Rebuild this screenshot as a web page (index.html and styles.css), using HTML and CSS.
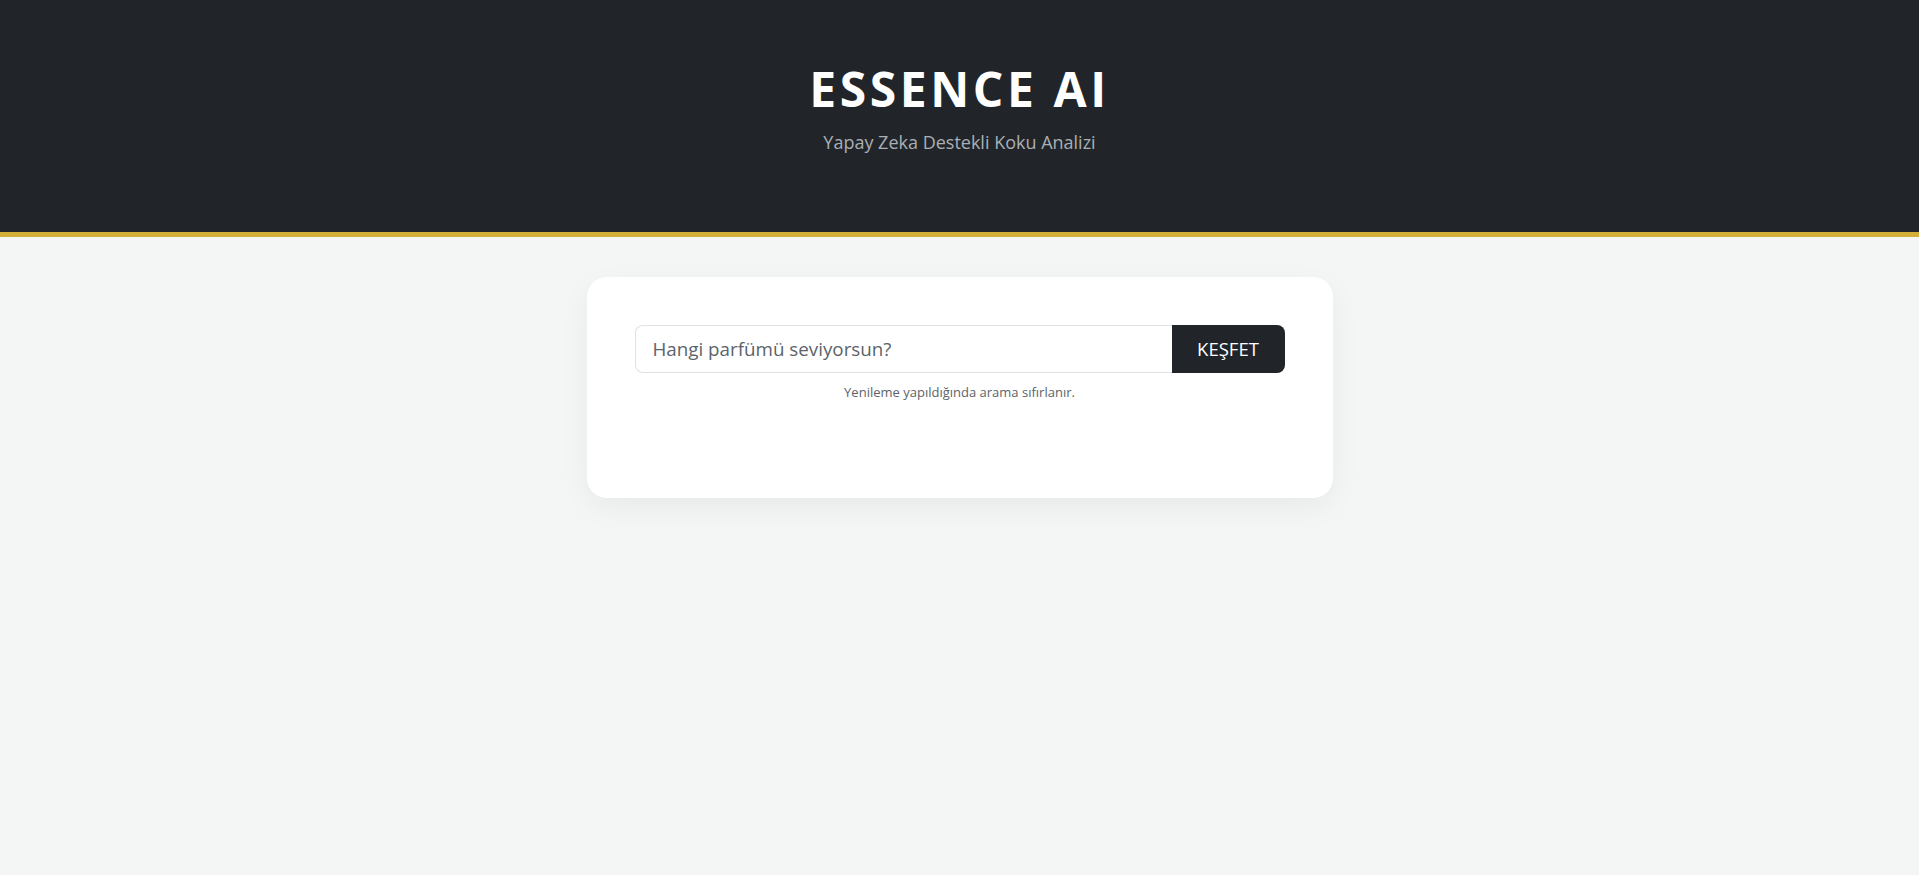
FILE: index.html
```html
<!DOCTYPE html>
<html lang="tr">
<head>
<meta charset="utf-8">
<title>Essence AI</title>
<link rel="stylesheet" href="styles.css">
</head>
<body>
<header class="hero">
  <h1 class="brand">ESSENCE AI</h1>
  <p class="tagline">Yapay Zeka Destekli Koku Analizi</p>
</header>
<main class="main">
  <section class="card">
    <form class="search" onsubmit="return false;">
      <input class="search-input" type="text" placeholder="Hangi parfümü seviyorsun?">
      <button class="search-btn" type="submit">KEŞFET</button>
    </form>
    <p class="hint">Yenileme yapıldığında arama sıfırlanır.</p>
    <div class="results"></div>
  </section>
</main>
</body>
</html>
```

FILE: styles.css
```css
* { box-sizing: border-box; }
html, body { margin: 0; padding: 0; }
body {
  background: #f4f6f5;
  font-family: "Open Sans", "Noto Sans", sans-serif;
  color: #212529;
  min-height: 100vh;
}
.hero {
  background: #212529;
  border-bottom: 5px solid #d4af37;
  text-align: center;
  padding: 60px 0 76px;
}
.brand {
  margin: 0;
  font-size: 48px;
  line-height: 1.2;
  font-weight: 700;
  color: #ffffff;
  letter-spacing: 3.6px;
}
.tagline {
  margin: 11px 0 0;
  font-size: 18px;
  line-height: 27px;
  font-weight: 400;
  color: #a9afb5;
}
.main {
  display: flex;
  justify-content: center;
  padding-top: 40px;
}
.card {
  width: 746px;
  background: #ffffff;
  border-radius: 20px;
  padding: 48px;
  box-shadow: 0 10px 30px rgba(0, 0, 0, 0.05);
}
.search {
  display: flex;
  margin: 0;
  height: 48px;
}
.search-input {
  flex: 1;
  min-width: 0;
  height: 48px;
  border: 1px solid #dee2e6;
  border-right: none;
  border-radius: 8px 0 0 8px;
  padding: 0 17px;
  font-family: inherit;
  font-size: 18.8px;
  color: #212529;
  background: #fff;
  outline: none;
}
.search-input::placeholder { color: #5c636a; opacity: 1; }
.search-btn {
  width: 113px;
  height: 48px;
  border: none;
  border-radius: 0 8px 8px 0;
  background: #212529;
  color: #ffffff;
  font-family: inherit;
  font-size: 18.5px;
  font-weight: 500;
  padding: 0;
  cursor: pointer;
}
.hint {
  margin: 10px 0 0;
  text-align: center;
  font-size: 13px;
  line-height: 19.5px;
  color: #5c636a;
}
.results {
  height: 48px;
}
```
